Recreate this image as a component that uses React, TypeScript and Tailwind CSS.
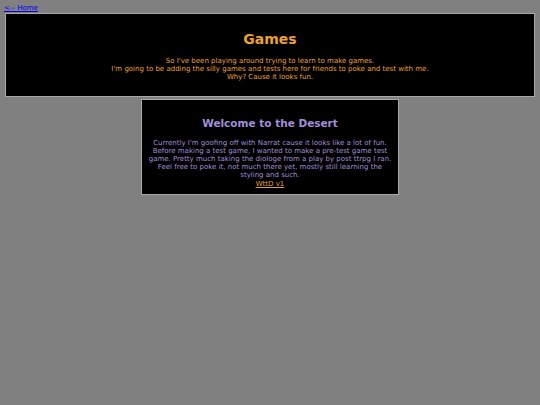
export default function App() {
  return (
    <div className="min-h-[405px] bg-[#808080] p-[4px] text-[7px]" style={{ fontFamily: '"DejaVu Sans", Verdana, sans-serif' }}>
      <a href="#" className="block text-[7px] leading-[9px] text-[#0000ee] underline">&lt;-- Home</a>

      <div className="mx-[1px] border border-[#a8a8a8] bg-black px-2 pt-[17px] pb-[15px] text-center text-[#eca22a]">
        <h1 className="mb-[9px] text-[14px] leading-[17px] font-bold">Games</h1>
        <p className="leading-[8px]">So I've been playing around trying to learn to make games.</p>
        <p className="leading-[8px]">I'm going to be adding the silly games and tests here for friends to poke and test with me.</p>
        <p className="leading-[8px]">Why? Cause it looks fun.</p>
      </div>

      <div className="mx-auto mt-[2px] w-[258px] border border-[#a8a8a8] bg-black px-[4px] pt-[17px] pb-[4px] text-center text-[#a08fd8]">
        <h2 className="mb-[9px] text-[10.5px] leading-[13px] font-bold">Welcome to the Desert</h2>
        <p className="leading-[8px]">
          Currently I'm goofing off with Narrat cause it looks like a lot of fun. Before making a test game, I wanted to make a pre-test game test game. Pretty much taking the diologe from a play by post ttrpg I ran. Feel free to poke it, not much there yet, mostly still learning the styling and such.
        </p>
        <a href="#" className="leading-[8px] text-[#e0a030] underline">WttD v1</a>
      </div>
    </div>
  );
}
